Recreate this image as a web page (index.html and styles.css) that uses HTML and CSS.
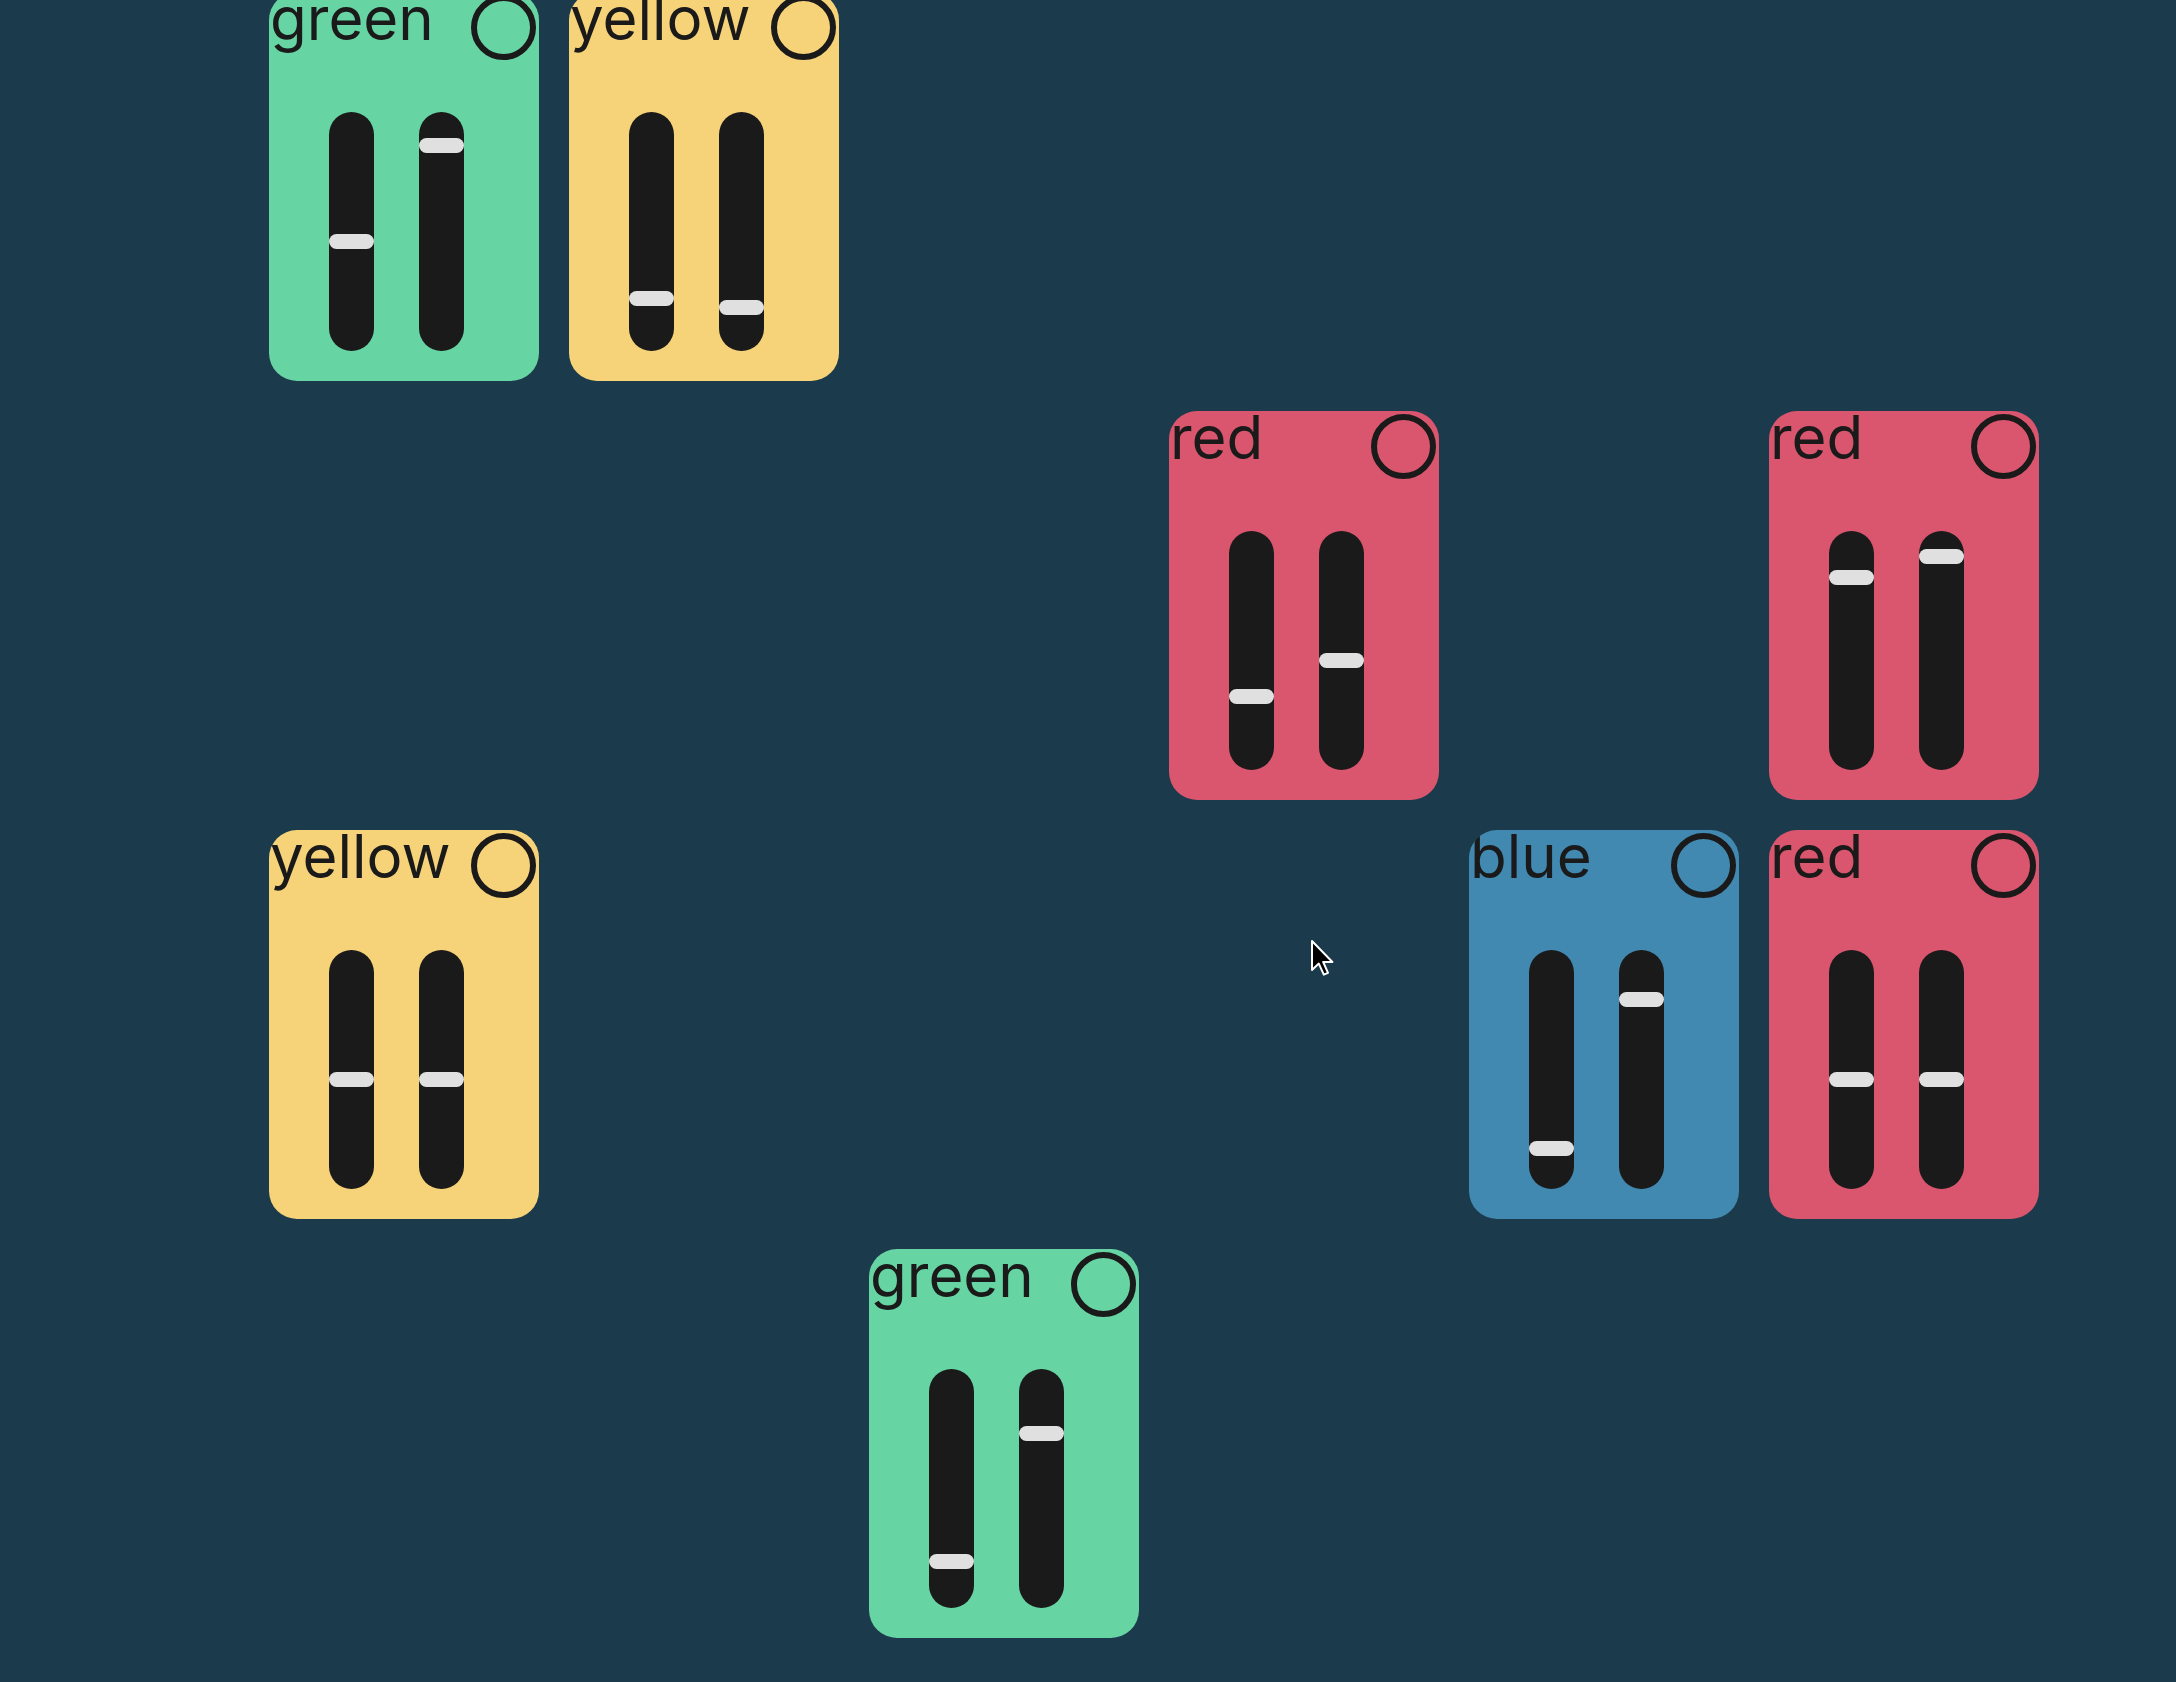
FILE: index.html
```html
<!DOCTYPE html>
<html lang="en">
<head>
<meta charset="utf-8">
<title>Mixer tiles</title>
<link rel="stylesheet" href="styles.css">
</head>
<body>
<main class="board">
  <section class="card green r1 c1">
    <header class="card-head"><span class="label">green</span><span class="knob"></span></header>
    <div class="sliders">
      <div class="track"><div class="thumb" style="top:122px"></div></div>
      <div class="track"><div class="thumb" style="top:26px"></div></div>
    </div>
  </section>
  <section class="card yellow r1 c2">
    <header class="card-head"><span class="label">yellow</span><span class="knob"></span></header>
    <div class="sliders">
      <div class="track"><div class="thumb" style="top:179px"></div></div>
      <div class="track"><div class="thumb" style="top:188px"></div></div>
    </div>
  </section>
  <section class="card red r2 c4">
    <header class="card-head"><span class="label">red</span><span class="knob"></span></header>
    <div class="sliders">
      <div class="track"><div class="thumb" style="top:158px"></div></div>
      <div class="track"><div class="thumb" style="top:122px"></div></div>
    </div>
  </section>
  <section class="card red r2 c6">
    <header class="card-head"><span class="label">red</span><span class="knob"></span></header>
    <div class="sliders">
      <div class="track"><div class="thumb" style="top:39px"></div></div>
      <div class="track"><div class="thumb" style="top:18px"></div></div>
    </div>
  </section>
  <section class="card yellow r3 c1">
    <header class="card-head"><span class="label">yellow</span><span class="knob"></span></header>
    <div class="sliders">
      <div class="track"><div class="thumb" style="top:122px"></div></div>
      <div class="track"><div class="thumb" style="top:122px"></div></div>
    </div>
  </section>
  <section class="card blue r3 c5">
    <header class="card-head"><span class="label">blue</span><span class="knob"></span></header>
    <div class="sliders">
      <div class="track"><div class="thumb" style="top:191px"></div></div>
      <div class="track"><div class="thumb" style="top:42px"></div></div>
    </div>
  </section>
  <section class="card red r3 c6">
    <header class="card-head"><span class="label">red</span><span class="knob"></span></header>
    <div class="sliders">
      <div class="track"><div class="thumb" style="top:122px"></div></div>
      <div class="track"><div class="thumb" style="top:122px"></div></div>
    </div>
  </section>
  <section class="card green r4 c3">
    <header class="card-head"><span class="label">green</span><span class="knob"></span></header>
    <div class="sliders">
      <div class="track"><div class="thumb" style="top:185px"></div></div>
      <div class="track"><div class="thumb" style="top:57px"></div></div>
    </div>
  </section>
</main>
<svg class="cursor" width="26" height="38" viewBox="0 0 13 19" aria-hidden="true">
  <path d="M1 1 L1 15.5 L4.4 12.3 L6.9 17.8 L9 16.9 L6.6 11.5 L11.2 11.5 Z" fill="#000" stroke="#fff" stroke-width="1" stroke-linejoin="round"/>
</svg>
</body>
</html>
```
FILE: styles.css
```css
html, body {
  margin: 0;
  padding: 0;
}
body {
  background: #1b3a4b;
  width: 2176px;
  height: 1682px;
  overflow: hidden;
  position: relative;
  font-family: Inter, "Liberation Sans", sans-serif;
}
.board {
  display: grid;
  grid-template-columns: repeat(6, 270px);
  grid-template-rows: repeat(4, 389px);
  column-gap: 30px;
  row-gap: 30px;
  padding-left: 269px;
  margin-top: -8px;
}
.card {
  border-radius: 28px;
  display: flex;
  flex-direction: column;
  overflow: hidden;
}
.green { background: #67d4a3; }
.yellow { background: #f6d279; }
.red { background: #d9566e; }
.blue { background: #4189b0; }
.r1 { grid-row: 1; }
.r2 { grid-row: 2; }
.r3 { grid-row: 3; }
.r4 { grid-row: 4; }
.c1 { grid-column: 1; }
.c2 { grid-column: 2; }
.c3 { grid-column: 3; }
.c4 { grid-column: 4; }
.c5 { grid-column: 5; }
.c6 { grid-column: 6; }
.card-head {
  display: flex;
  justify-content: space-between;
  align-items: flex-start;
  height: 120px;
}
.label {
  font-size: 60px;
  line-height: 1;
  color: #1a1a1a;
  margin-top: -4px;
  padding-left: 1px;
}
.knob {
  width: 65px;
  height: 65px;
  box-sizing: border-box;
  border: 6px solid #1a1a1a;
  border-radius: 50%;
  margin: 3px 3px 0 0;
}
.sliders {
  display: flex;
  gap: 45px;
  padding-left: 60px;
}
.track {
  position: relative;
  width: 45px;
  height: 239px;
  border-radius: 23px;
  background: #1a1a1a;
}
.thumb {
  position: absolute;
  left: 0;
  right: 0;
  height: 15px;
  border-radius: 8px;
  background: #e0e0e0;
}
.cursor {
  position: absolute;
  left: 1310px;
  top: 939px;
}
```
